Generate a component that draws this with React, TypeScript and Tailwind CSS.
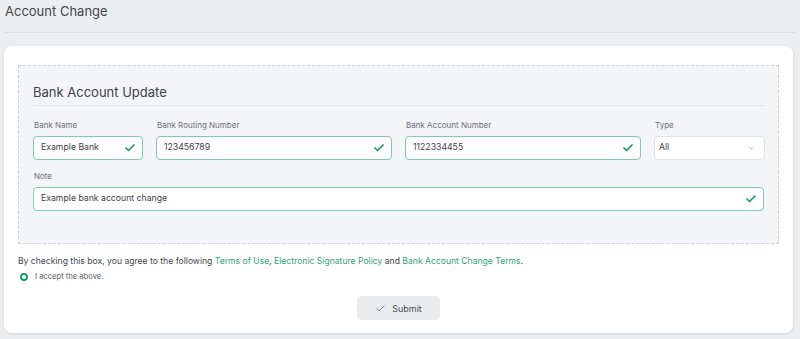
import { Check, ChevronDown } from 'lucide-react';

// Form values are static mock data
const fields = [
  { id: 'bankName', label: 'Bank Name', value: 'Example Bank' },
  { id: 'routing', label: 'Bank Routing Number', value: '123456789' },
  { id: 'account', label: 'Bank Account Number', value: '1122334455' },
];

function ValidInput({ label, value }: { label: string; value: string }) {
  return (
    <div className="flex flex-col">
      <label className="text-[8px] text-[#6b7178] h-[11px] mb-[5px] leading-[11px] pl-[1px]">{label}</label>
      <div className="h-[24px] flex items-center justify-between bg-white border border-[#7fcbb0] rounded-[4px] pl-[7px] pr-[6px]">
        <span className="text-[8.7px] text-[#3d4348]">{value}</span>
        <Check className="w-[12px] h-[12px] text-[#1d9a68]" strokeWidth={3.5} />
      </div>
    </div>
  );
}

export default function App() {
  return (
    <div className="w-[800px] h-[339px] bg-[#eceff2] px-[4px] overflow-hidden" style={{ fontFamily: 'Inter, "Open Sans", sans-serif' }}>
      <div className="h-[33px] flex items-center border-b border-[#dde1e5] pl-[1px]">
        <h1 className="text-[13px] text-[#42474c] leading-none -mt-[9px]">Account Change</h1>
      </div>

      <div className="mt-[13px] bg-white rounded-[8px] shadow-[0_1px_3px_rgba(0,0,0,0.12)] w-[789px] pt-[19px] pb-[13px] px-[14px]">
        <div className="border border-dashed border-[#cfd3d8] bg-[#f4f5f8] px-[14px] pt-[16px] pb-[32px]">
          <h2 className="text-[13px] text-[#3d4348] leading-[20px] pb-[3px] border-b border-[#e1e4e8]">Bank Account Update</h2>

          <div className="grid grid-cols-[110px_236px_236px_111px] gap-x-[13px] mt-[14px]">
            {fields.map((f) => (
              <ValidInput key={f.id} label={f.label} value={f.value} />
            ))}
            <div className="flex flex-col">
              <label className="text-[8px] text-[#6b7178] h-[11px] mb-[5px] leading-[11px] pl-[1px]">Type</label>
              <div className="h-[24px] flex items-center justify-between bg-white border border-[#dfe2e6] rounded-[4px] pl-[4px] pr-[8px]">
                <span className="text-[8.7px] text-[#3d4348]">All</span>
                <ChevronDown className="w-[10px] h-[10px] text-[#9aa0a6]" strokeWidth={1.5} />
              </div>
            </div>
          </div>

          <div className="mt-[11px]">
            <ValidInput label="Note" value="Example bank account change" />
          </div>
        </div>

        <p className="mt-[11px] text-[8.6px] text-[#42474c] leading-[12px]">
          By checking this box, you agree to the following{' '}
          <span className="text-[#2fa37a]">Terms of Use</span>,{' '}
          <span className="text-[#2fa37a]">Electronic Signature Policy</span> and{' '}
          <span className="text-[#2fa37a]">Bank Account Change Terms</span>.
        </p>
        <div className="flex items-center gap-[7px] mt-[4px] pl-[2px]">
          <span className="w-[8px] h-[8px] rounded-full border-[2.5px] border-[#1d9a68] bg-white" />
          <span className="text-[7.6px] text-[#55595e]">I accept the above.</span>
        </div>

        <div className="flex justify-center mt-[14px]">
          <button className="w-[83px] h-[24px] bg-[#e9ecef] rounded-[4px] flex items-center justify-center gap-[6px] text-[9px] text-[#4a4f54]">
            <Check className="w-[11px] h-[11px] text-[#5f6368]" strokeWidth={1.6} />
            Submit
          </button>
        </div>
      </div>
    </div>
  );
}
